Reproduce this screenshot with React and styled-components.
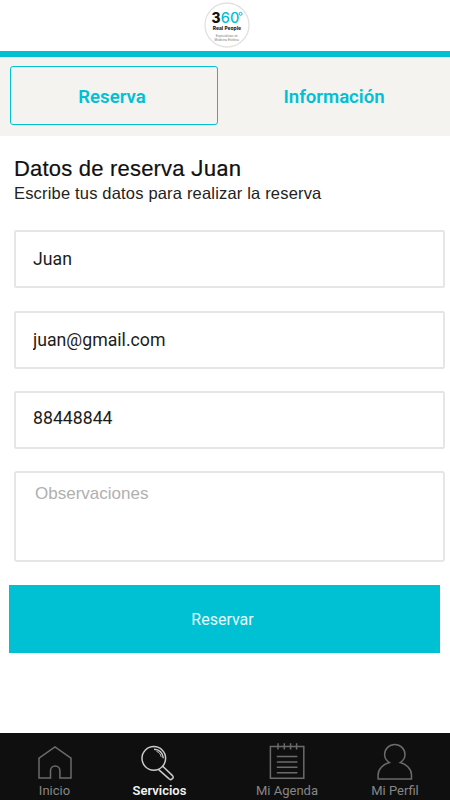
import React, { useState } from 'react'
import styled, { createGlobalStyle } from 'styled-components'

const GlobalStyle = createGlobalStyle`
    *{
        box-sizing: border-box;
        margin: 0;
        padding: 0;
    }
    body{
        background: #fff;
        font-family: Roboto, 'Liberation Sans', sans-serif;
        overflow: hidden;
    }
`;

const navItems = [
    { id: 'inicio', title: 'Inicio', icon: <HomeIcon />, width: 109 },
    { id: 'servicios', title: 'Servicios', icon: <SearchIcon />, width: 101 },
    { id: 'agenda', title: 'Mi Agenda', icon: <AgendaIcon />, width: 154 },
    { id: 'perfil', title: 'Mi Perfil', icon: <ProfileIcon />, width: 62 },
]

function Logo() {
    return (
        <svg width="46" height="46" viewBox="0 0 46 46">
            <circle cx="23" cy="23" r="22" fill="#fff" stroke="#e2e2e2" strokeWidth="1.3" />
            <text x="7.6" y="21.2" fontFamily="Inter" fontSize="14" fontWeight="800" textLength="9" lengthAdjust="spacingAndGlyphs" fill="#111">3</text>
            <text x="16.8" y="21.2" fontFamily="Inter" fontSize="14" fontWeight="500" textLength="18.4" lengthAdjust="spacingAndGlyphs" fill="#00c0d3">60</text>
            <circle cx="36.6" cy="11.8" r="1.5" fill="none" stroke="#00c0d3" strokeWidth="1" />
            <text x="8.8" y="27.8" fontFamily="Inter" fontSize="5.4" fontWeight="700" textLength="28.2" lengthAdjust="spacingAndGlyphs" fill="#111">Real People</text>
            <text x="11.8" y="35" fontFamily="Liberation Sans" fontSize="3" textLength="22" lengthAdjust="spacingAndGlyphs" fill="#777">Especialistas en</text>
            <text x="10.6" y="38.6" fontFamily="Liberation Sans" fontSize="3" textLength="24.4" lengthAdjust="spacingAndGlyphs" fill="#777">Medicina Estética</text>
        </svg>
    )
}

function HomeIcon() {
    return (
        <svg width="40" height="40" viewBox="0 0 40 40">
            <path d="M4 36V16.2L20 4.8l16 11.4V36H24.9v-7.4a4.7 4.7 0 0 0-9.4 0V36Z" />
        </svg>
    )
}

function SearchIcon() {
    return (
        <svg width="40" height="40" viewBox="0 0 40 40">
            <circle cx="13.8" cy="16.4" r="11.8" />
            <path d="M14 7.200c5.200 0 9.100 4 9.300 9.100M18.400 27.400l10.400 9.200a2.200 2.200 0 0 0 3.700-3L22.500 24" />
            <path d="M16.500 9.400c2.600.8 4.200 2.800 4.700 5.400" strokeWidth="1" />
        </svg>
    )
}

function AgendaIcon() {
    return (
        <svg width="40" height="40" viewBox="0 0 40 40">
            <path d="M3.4 4.5h33.4v31.7H3.4ZM11 1.3v6.2M17.3 1.3v6.2M23.6 1.3v6.2M29.6 1.3v6.2M9.8 14.5h20.6M9.8 20h20.6M9.8 25.3h20.6M9.8 30.7h20.6" />
        </svg>
    )
}

function ProfileIcon() {
    return (
        <svg width="40" height="40" viewBox="0 0 40 40">
            <path d="M14.4 20.6C11.3 18.7 9.6 16.1 9.6 12.6a10.2 10.2 0 0 1 20.4 0c0 3.5-1.7 6.1-4.8 8C31.7 22.3 36.5 27 36.5 33v4H3.1v-4c0-6 4.8-10.7 11.3-12.4Z" />
        </svg>
    )
}

function App() {
    const [tab, setTab] = useState('reserva')

    return (
        <AppStyled>
            <GlobalStyle />
            <Header>
                <Logo />
            </Header>
            <Tabs>
                <Tab $active={tab === 'reserva'} onClick={() => setTab('reserva')}>Reserva</Tab>
                <Tab $active={tab === 'info'} onClick={() => setTab('info')}>Información</Tab>
            </Tabs>
            <Main>
                <Title>Datos de reserva <span>Juan</span></Title>
                <Subtitle>Escribe tus datos para realizar la reserva</Subtitle>
                <Form onSubmit={(e) => e.preventDefault()}>
                    <Field defaultValue="Juan" />
                    <Field type="email" defaultValue="juan@gmail.com" />
                    <Field defaultValue="88448844" $lift="4px" />
                    <Notes placeholder="Observaciones" />
                    <Submit>Reservar</Submit>
                </Form>
            </Main>
            <Nav>
                {navItems.map((item) => (
                    <NavItem key={item.id} $active={item.id === 'servicios'} $width={item.width}>
                        {item.icon}
                        <span>{item.title}</span>
                    </NavItem>
                ))}
            </Nav>
        </AppStyled>
    )
}

const AppStyled = styled.div`
    width: 450px;
    height: 800px;
    display: flex;
    flex-direction: column;
    background: #fff;
`;

const Header = styled.header`
    height: 57px;
    padding: 2px 0 0 3px;
    display: flex;
    justify-content: center;
    border-bottom: 6px solid #00c0d3;
    svg{
        display: block;
    }
`;

const Tabs = styled.div`
    height: 79px;
    padding: 9px 10px 11px;
    display: flex;
    gap: 14px;
    background: #f5f3f0;
`;

const Tab = styled.button`
    width: 208px;
    height: 59px;
    padding: 2px 4px 0 0;
    border: 1px solid ${({ $active }) => ($active ? '#00c0d3' : 'transparent')};
    border-radius: 3px;
    background: none;
    color: #00c0d3;
    font-family: Roboto, sans-serif;
    font-size: 18.6px;
    font-weight: 600;
`;

const Main = styled.main`
    flex: 1;
    padding: 19px 6px 0 14px;
`;

const Title = styled.h1`
    color: #111;
    font-family: 'Liberation Sans', Arial, sans-serif;
    font-size: 22px;
    font-weight: 400;
    line-height: 26px;
    letter-spacing: 0.2px;
    -webkit-text-stroke: 0.2px #111;
    span{
        font-family: Roboto, sans-serif;
        font-size: 22.5px;
    }
`;

const Subtitle = styled.p`
    padding-top: 1px;
    color: #222;
    font-family: 'Liberation Sans', Arial, sans-serif;
    font-size: 16.5px;
    line-height: 20px;
    letter-spacing: 0.18px;
    white-space: nowrap;
`;

const Form = styled.form`
    display: flex;
    flex-direction: column;
    gap: 22.4px;
    padding-top: 27.2px;
`;

const Field = styled.input`
    width: 430.5px;
    height: 58px;
    padding: 0 17px ${({ $lift }) => $lift || '0'};
    border: 2px solid #e6e6e6;
    border-radius: 2px;
    outline: none;
    background: #fff;
    color: #1c1c1c;
    font-family: Roboto, sans-serif;
    font-size: 17.7px;
`;

const Notes = styled.textarea`
    display: block;
    width: 430.5px;
    height: 91px;
    padding: 11px 19px;
    border: 2px solid #e6e6e6;
    border-radius: 3px;
    outline: none;
    resize: none;
    font-family: 'Liberation Sans', Arial, sans-serif;
    font-size: 17px;
    line-height: 20px;
    &::placeholder{
        color: #b0b0b0;
    }
`;

const Submit = styled.button`
    width: 431px;
    height: 68px;
    margin: 0.6px 0 0 -5px;
    padding-right: 4px;
    border: none;
    background: #00c0d3;
    color: #e9fcfd;
    font-family: Roboto, sans-serif;
    font-size: 16px;
`;

const Nav = styled.nav`
    height: 67px;
    padding-top: 9px;
    display: flex;
    background: #0f0f0f;
`;

const NavItem = styled.a`
    width: ${({ $width }) => $width}px;
    flex-shrink: 0;
    display: flex;
    flex-direction: column;
    align-items: center;
    gap: 1px;
    color: ${({ $active }) => ($active ? '#f2f2f2' : '#868686')};
    font-size: 13px;
    font-weight: ${({ $active }) => ($active ? 600 : 400)};
    line-height: 15px;
    white-space: nowrap;
    svg{
        fill: none;
        stroke: ${({ $active }) => ($active ? '#c9c9c9' : '#6b6b6b')};
        stroke-width: 1.5;
    }
`;

export default App
